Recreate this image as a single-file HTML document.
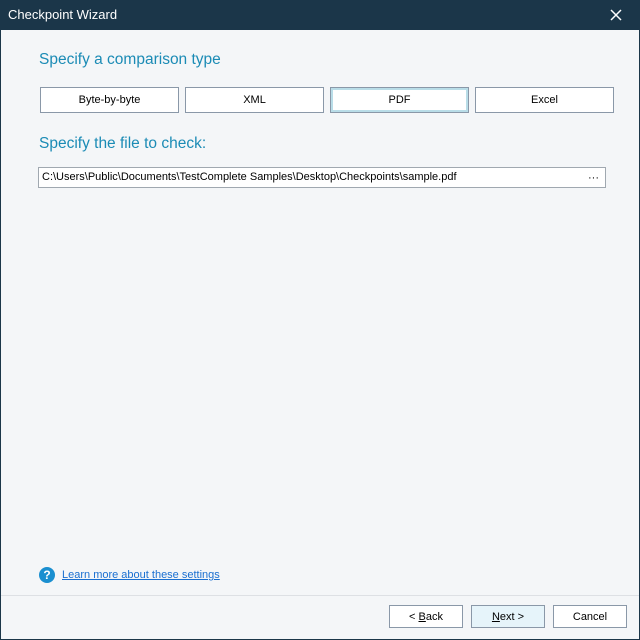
<!DOCTYPE html><html><head><style>
body{margin:0;width:640px;height:640px;overflow:hidden;font-family:"Liberation Sans",sans-serif;}
.win{position:absolute;left:0;top:0;width:638px;height:638px;border:1px solid #1b3649;background:#f4f6f8;}
.tb{position:absolute;left:0;top:0;width:640px;height:30px;background:#1b3649;color:#fff;font-size:13px;}
.abs{position:absolute}
.h{color:#1b8bb5;font-size:15.5px}
.b{position:absolute;background:#fff;border:1px solid #8a98a8;font-size:11px;text-align:center;box-sizing:border-box;color:#000}
</style></head><body>
<div class="win"></div>
<div class="tb"><span class="abs" style="left:8px;top:7px">Checkpoint Wizard</span>
<svg class="abs" style="left:610px;top:9px" width="12" height="12"><path d="M1 1L11 11M11 1L1 11" stroke="#fff" stroke-width="1.5"/></svg></div>
<div class="abs h" style="left:39px;top:51px">Specify a comparison type</div>
<div class="b" style="left:40px;top:87px;width:139px;height:26px;line-height:24px">Byte-by-byte</div>
<div class="b" style="left:185px;top:87px;width:139px;height:26px;line-height:24px">XML</div>
<div class="b" style="left:330px;top:87px;width:139px;height:26px;line-height:24px;box-shadow:inset 0 0 0 2px #b9dde8">PDF</div>
<div class="b" style="left:475px;top:87px;width:139px;height:26px;line-height:24px">Excel</div>
<div class="abs h" style="left:39px;top:135px">Specify the file to check:</div>
<div class="b" style="left:38px;top:167px;width:568px;height:21px;line-height:19px;text-align:left;padding-left:3px;font-size:11px;border-color:#a0a8b0">C:\Users\Public\Documents\TestComplete Samples\Desktop\Checkpoints\sample.pdf<span class="abs" style="right:6px;top:1px">···</span></div>
<div class="abs" style="left:39px;top:567px;width:16px;height:16px;border-radius:50%;background:#1a8fd0;color:#fff;font-size:12px;font-weight:bold;text-align:center;line-height:16px">?</div>
<div class="abs" style="left:62px;top:569px;font-size:11px;color:#1a6fd0;text-decoration:underline">Learn more about these settings</div>
<div class="abs" style="left:1px;top:595px;width:638px;height:1px;background:#dde0e4"></div>
<div class="b" style="left:389px;top:605px;width:74px;height:23px;line-height:22px">&lt; <u>B</u>ack</div>
<div class="b" style="left:471px;top:605px;width:74px;height:23px;line-height:22px;background:#e6f4fa"><u>N</u>ext &gt;</div>
<div class="b" style="left:553px;top:605px;width:74px;height:23px;line-height:22px">Cancel</div>
</body></html>
